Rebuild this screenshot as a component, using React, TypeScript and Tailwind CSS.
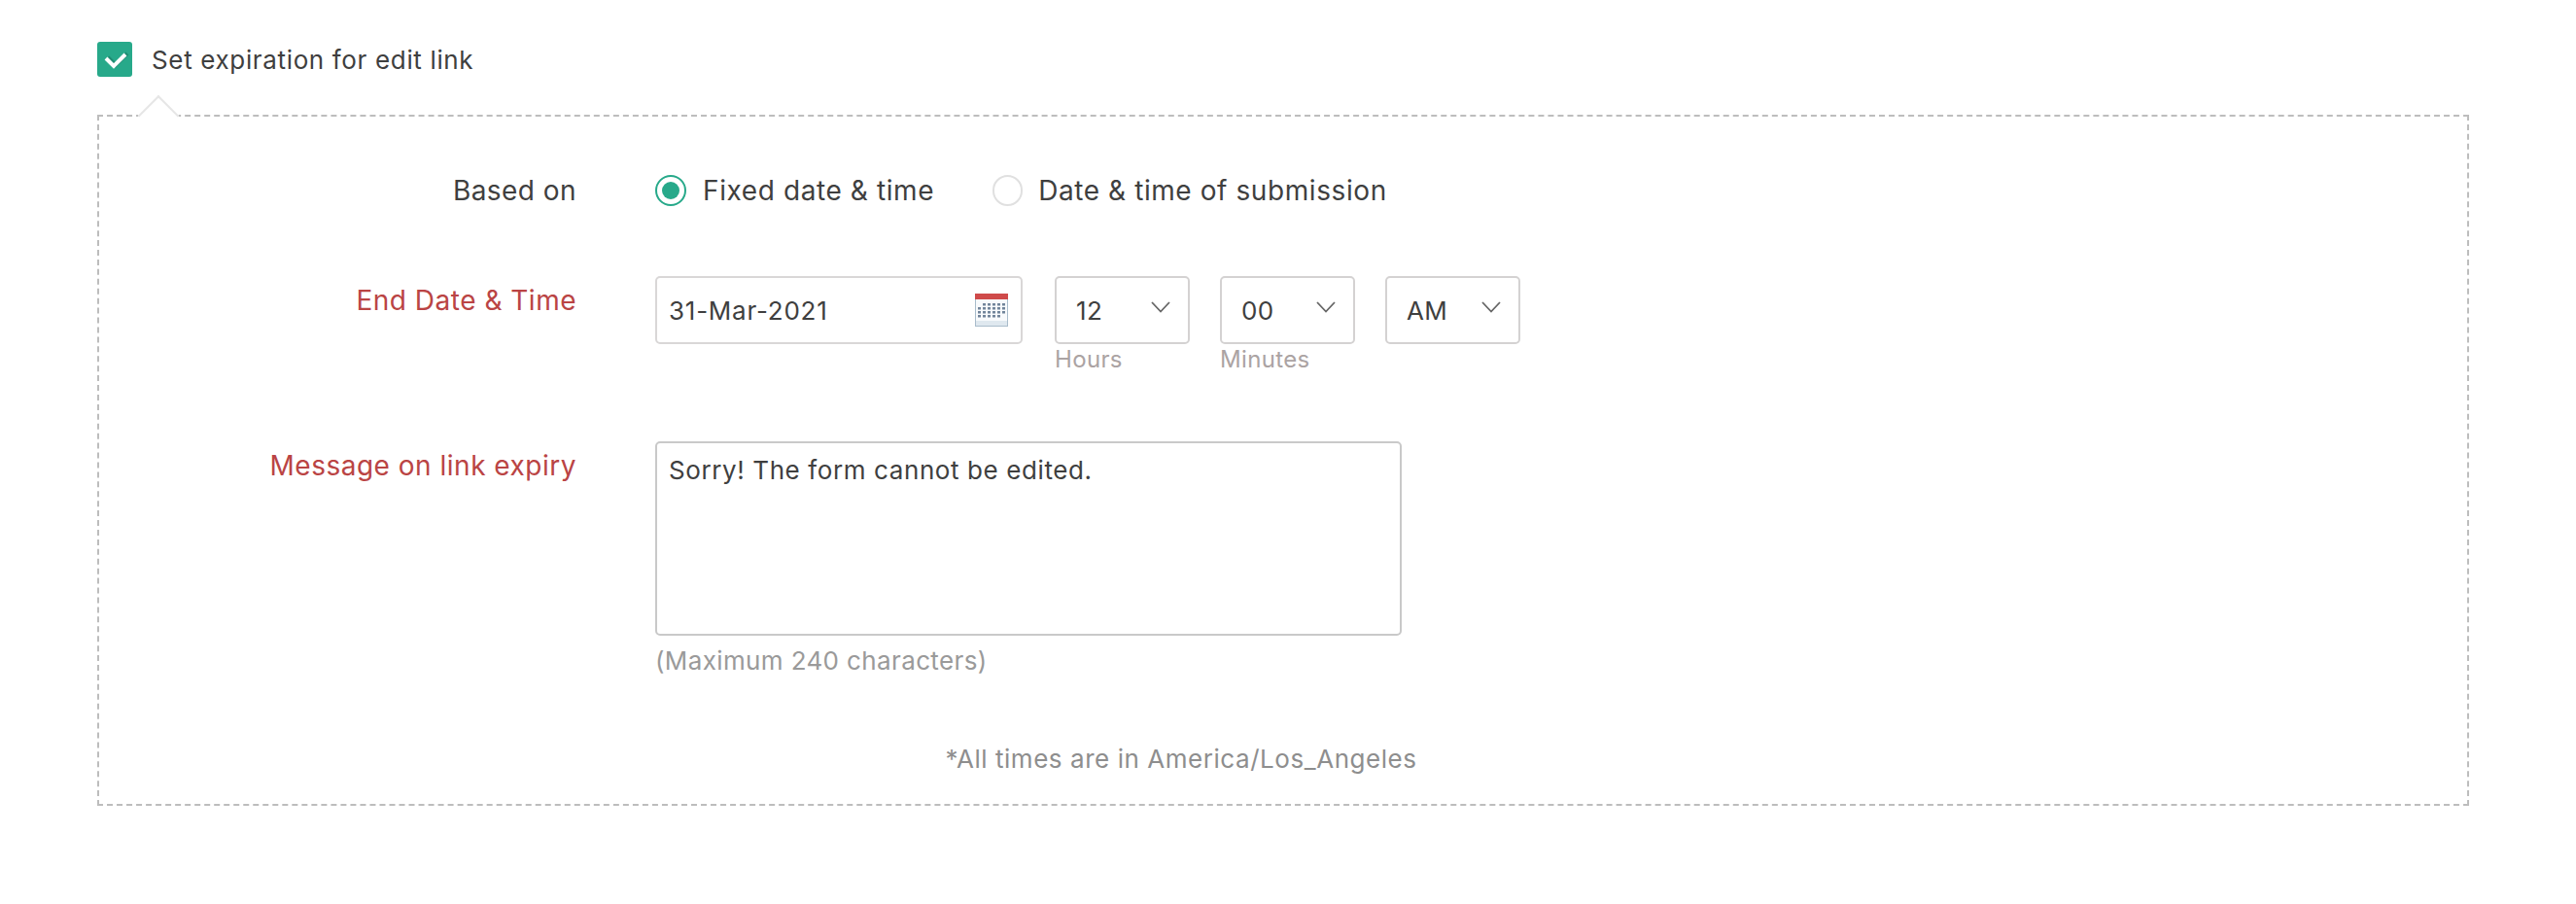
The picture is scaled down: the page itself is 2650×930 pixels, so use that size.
import React from 'react';

const CalendarIcon = () => (
  <svg width="34" height="34" viewBox="0 0 34 34" className="block">
    <rect x="0.5" y="0.5" width="33" height="33" fill="#f8fafc" stroke="#a9bccb" />
    <rect x="0" y="0" width="34" height="6" fill="#cf4a4a" />
    <rect x="1" y="28" width="32" height="5" fill="#dfe8ef" />
    {[10, 14, 18, 22].map((y) =>
      [3, 8, 13, 18, 23, 28].map((x) => (
        (y === 10 && x === 3) || (y === 22 && x === 28) ? null : <rect key={`${x}-${y}`} x={x} y={y} width="3" height="2.5" fill="#71849a" />
      ))
    )}
  </svg>
);

const TimeSelect = ({ value, hint }: { value: string; hint?: string }) => (
  <div className="w-[139px]">
    <div className="flex h-[70px] items-center justify-between rounded-[5px] border-2 border-[#d4d2d2] pl-[20px] pr-[18px]">
      <span className="pt-[1px] text-[26px] tracking-[0.4px]">{value}</span>
      <svg width="20" height="12" viewBox="0 0 20 12" className="mb-[6px]">
        <polyline points="1,1 10,10.5 19,1" fill="none" stroke="#666666" strokeWidth="1.8" />
      </svg>
    </div>
    {hint && <div className="mt-[1px] text-[24px] leading-[30px] tracking-[0.35px] text-[#aba3a3]">{hint}</div>}
  </div>
);

export default function App() {
  return (
    <div className="h-[930px] w-[2650px] bg-white font-['Inter',sans-serif] text-[#3f3f3f]">
      <div className="pl-[100px] pr-[110px] pt-[42px]">
        <div className="flex items-center gap-[20px]">
          <div className="flex h-[36px] w-[36px] items-center justify-center rounded-[3px] bg-[#27a98a]">
            <svg width="36" height="36" viewBox="0 0 36 36">
              <polyline points="10,17 18,25 30,13" fill="none" stroke="#1f8c72" strokeWidth="4" transform="translate(1,-1)" />
              <polyline points="9,17 17,25 29,13" fill="none" stroke="#ffffff" strokeWidth="4" />
            </svg>
          </div>
          <span className="pt-[2px] text-[26px] leading-[36px] tracking-[0.65px]">Set expiration for edit link</span>
        </div>

        <div className="relative mt-[38px] h-[711px] border-2 border-dashed border-[#bdbdbd] pt-[60px]">
          <div className="absolute left-[46px] top-[-16px] h-[30px] w-[30px] rotate-45 border-l-2 border-t-2 border-[#e6e6e6] bg-white" />

          <div className="relative flex">
            <div className="w-[491px] text-right text-[28px] leading-[32px] tracking-[0.45px]">Based on</div>
            <div className="ml-[81px] flex items-center">
              <div className="flex h-[32px] w-[32px] items-center justify-center rounded-full border-2 border-[#27a98a]">
                <div className="h-[18px] w-[18px] rounded-full bg-[#27a98a]" />
              </div>
              <span className="ml-[17px] text-[28px] leading-[32px] tracking-[0.6px]">Fixed date &amp; time</span>
              <div className="ml-[60px] h-[32px] w-[31px] rounded-full border-2 border-[#e0e0e0]" />
              <span className="ml-[16px] text-[28px] leading-[32px] tracking-[0.58px]">Date &amp; time of submission</span>
            </div>
          </div>

          <div className="mt-[72px] flex">
            <div className="w-[491px] pt-[9px] text-right text-[28px] leading-[32px] tracking-[0.5px] text-[#ba4444]">End Date &amp; Time</div>
            <div className="ml-[81px] flex gap-[31px]">
              <div className="mr-[2px] flex h-[70px] w-[378px] items-center justify-between rounded-[5px] border-2 border-[#d9d7d7] pl-[12px] pr-[13px]">
                <span className="pt-[1px] text-[26px] tracking-[0.75px]">31-Mar-2021</span>
                <CalendarIcon />
              </div>
              <TimeSelect value="12" hint="Hours" />
              <TimeSelect value="00" hint="Minutes" />
              <TimeSelect value="AM" />
            </div>
          </div>

          <div className="mt-[69px] flex">
            <div className="w-[491px] pt-[9px] text-right text-[28px] leading-[32px] tracking-[0.5px] text-[#ba4444]">Message on link expiry</div>
            <div className="ml-[81px]">
              <div className="h-[200px] w-[768px] rounded-[5px] border-2 border-[#c9c9c9] px-[12px] pt-[12px] text-[26px] leading-[32px] tracking-[0.6px]">
                Sorry! The form cannot be edited.
              </div>
              <div className="mt-[10px] text-[26px] leading-[32px] tracking-[0.37px] text-[#9a9a9a]">(Maximum 240 characters)</div>
            </div>
          </div>

          <div className="mt-[69px] pr-[210px] text-center text-[26px] leading-[32px] tracking-[0.55px] text-[#8e8e8e]">*All times are in America/Los_Angeles</div>
        </div>
      </div>
    </div>
  );
}
